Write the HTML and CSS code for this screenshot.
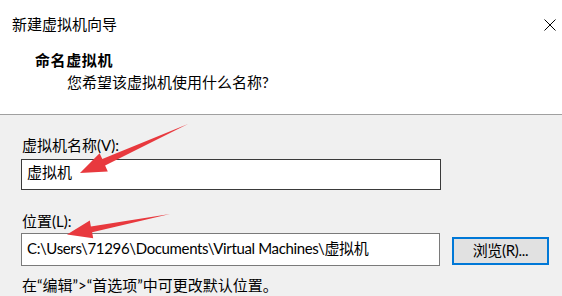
FILE: index.html
```html
<!DOCTYPE html>
<html lang="zh-CN">
<head>
<meta charset="utf-8">
<title>新建虚拟机向导</title>
<link rel="stylesheet" href="styles.css">
</head>
<body>
<div class="window">
  <div class="header">
    <div class="titlebar">
      <span class="title">新建虚拟机向导</span>
      <svg class="close" width="12" height="12" viewBox="0 0 12 12"><path d="M0.5 0.5 L11.5 11.5 M11.5 0.5 L0.5 11.5" stroke="#000" stroke-width="1" fill="none"/></svg>
    </div>
    <div class="heading">命名虚拟机</div>
    <div class="subheading">您希望该虚拟机使用什么名称?</div>
  </div>
  <div class="content">
    <div class="label">虚拟机名称(V):</div>
    <div class="field field-name">虚拟机</div>
    <div class="label label-loc">位置(L):</div>
    <div class="row">
      <div class="field field-loc">C:\Users\71296\Documents\Virtual Machines\虚拟机</div>
      <div class="button">浏览(R)...</div>
    </div>
    <div class="hint">在“编辑”&gt;“首选项”中可更改默认位置。</div>
  </div>
  <svg class="arrows" width="562" height="296" viewBox="0 0 562 296">
    <polygon fill="#e8393e" points="188,124 105.1,165.5 107.8,171.4 80,173 99.6,153.2 102.3,159.1"/>
    <polygon fill="#e8393e" points="170,214 92.1,232.3 93.2,238.2 67,234.5 89.8,220.6 90.9,226.5"/>
  </svg>
</div>
</body>
</html>
```

FILE: styles.css
```css
html, body {
  margin: 0;
  padding: 0;
}
body {
  width: 562px;
  height: 296px;
  overflow: hidden;
  background: #f0f0f0;
  font-family: "Lato", "Noto Sans CJK SC", sans-serif;
  font-size: 15px;
  color: #000;
}
.window {
  position: relative;
  width: 562px;
  height: 296px;
}
.header {
  background: #fff;
  height: 114px;
  border-bottom: 1px solid #a0a0a0;
  box-sizing: content-box;
}
.titlebar {
  display: flex;
  align-items: center;
  justify-content: space-between;
  padding: 14px 6px 0 12px;
  line-height: 20px;
}
.close {
  display: block;
  margin-top: 2px;
}
.heading {
  margin-top: 16px;
  margin-left: 35px;
  font-weight: 700;
  line-height: 20px;
  letter-spacing: 0.6px;
}
.subheading {
  margin-top: 2px;
  margin-left: 67px;
  line-height: 20px;
}
.content {
  padding: 20px 0 0 21px;
}
.label {
  line-height: 20px;
  margin-left: 1px;
}
.label-loc {
  margin-top: 21px;
}
.field {
  background: #fff;
  box-sizing: border-box;
  padding-left: 5px;
  white-space: nowrap;
  overflow: hidden;
}
.field-name {
  margin-top: 4px;
  width: 420px;
  height: 31px;
  border: 1px solid #3a3a3a;
  line-height: 24px;
}
.row {
  display: flex;
  align-items: flex-start;
  margin-top: 2px;
}
.field-loc {
  width: 419px;
  height: 33px;
  border: 1px solid #7a7a7a;
  line-height: 29px;
  letter-spacing: -0.35px;
}
.button {
  margin-left: 12px;
  margin-top: 4px;
  width: 97px;
  height: 28px;
  box-sizing: border-box;
  border: 2px solid #0078d7;
  background: #e1e1e1;
  text-align: center;
  line-height: 23px;
  letter-spacing: -0.3px;
}
.hint {
  margin-top: 9px;
  margin-left: 1px;
  line-height: 20px;
}
.arrows {
  position: absolute;
  left: 0;
  top: 0;
  pointer-events: none;
}
```
